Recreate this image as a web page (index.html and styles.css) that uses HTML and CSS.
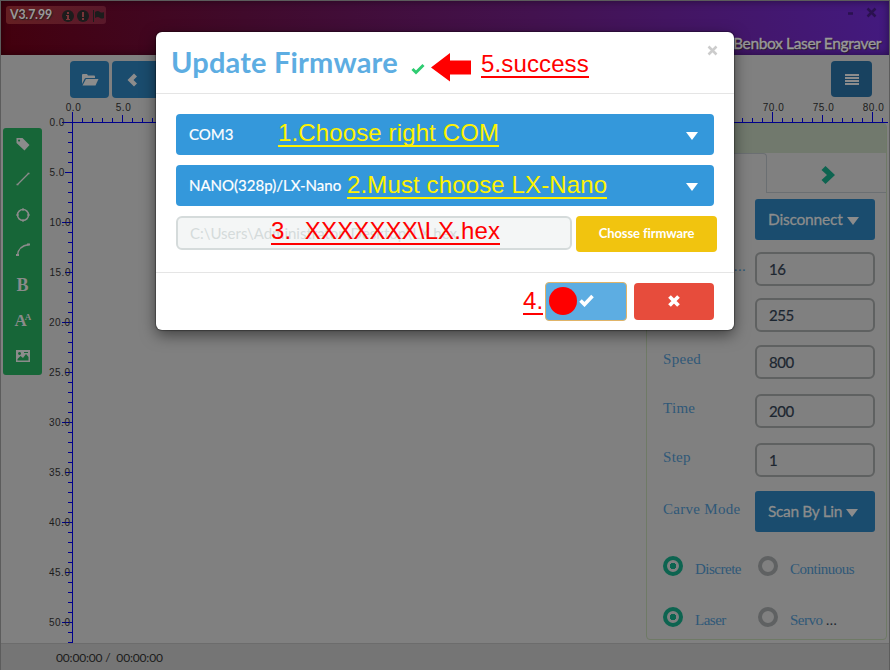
FILE: index.html
```html
<!DOCTYPE html>
<html lang="en">
<head>
<meta charset="utf-8">
<title>Benbox Laser Engraver</title>
<link rel="stylesheet" href="styles.css">
</head>
<body>
<div class="window">
  <header class="titlebar">
    <div class="version"><b>V3.7.99</b>
      <svg width="44" height="14" viewBox="0 0 44 14"><g fill="#1c1c1c"><circle cx="7" cy="7" r="6"/><circle cx="22" cy="7" r="6"/><path d="M32 1h1v12h-1zM34 3q3-2 5 0 2 1 4 0v6q-2 1-4 0-2-2-5 0z"/></g><path d="M6 3h2v2H6zM5 6h3v4h1v1H5v-1h1V7H5zM21 3h2v5h-2zM21 9h2v2h-2z" fill="#7a3538"/></svg>
    </div>
    <div class="brand">
      <svg width="36" height="14" viewBox="0 0 36 14"><path d="M3 7.500h5M22.500 2.500l8 8M30.500 2.500l-8 8" stroke="#2a1150" stroke-width="2.500" fill="none"/></svg>
      <span>Benbox Laser Engraver</span>
    </div>
  </header>
  <nav class="actions">
    <div class="action"><svg width="18" height="14" viewBox="0 0 18 14"><path d="M1 11V2q0-1 1-1h4l1 1.500h6q1 0 1 1V5H5q-1 0-1.500 1z"/><path d="M5 6h12.500l-3 6.500H1.500z"/></svg></div>
    <div class="action wide"><svg width="12" height="14" viewBox="0 0 12 14"><path d="M8 .5l3 3L7.500 7l3.500 3.500-3 3L1.500 7z"/></svg></div>
    <div class="action menu"><svg width="14" height="11" viewBox="0 0 14 11"><path d="M0 0h14v2H0zM0 3h14v2H0zM0 6h14v2H0zM0 9h14v2H0z"/></svg></div>
  </nav>
  <main class="workspace">
    <aside class="tools">
      <svg viewBox="0 0 16 16"><path fill="#8b8b8b" fill-rule="evenodd" d="M1.500 2h6l7 7-5 5.500-8-7.500zM4 3.500a1 1 0 1 0 .1 0z"/></svg>
      <svg viewBox="0 0 16 16"><path d="M2 14L14 2M1.500 13.500h2M12.500 2.500h2" stroke-width="1.300"/></svg>
      <svg viewBox="0 0 16 16"><circle cx="8" cy="8" r="5.500" stroke-width="1.500"/><path d="M7 2.500h2M7 13.500h2M1.500 8h2M12.500 8h2" stroke-width="2"/></svg>
      <svg viewBox="0 0 16 16"><path d="M2.500 13.500Q3 4 14 2.500" stroke-width="1.500"/><path d="M1 13h3M12 2.500h3" stroke-width="2"/></svg>
      <span class="bold">B</span>
      <span class="size">A<sup>A</sup></span>
      <svg viewBox="0 0 16 16"><path fill="#8b8b8b" fill-rule="evenodd" d="M1 2h14v12H1zM2.500 12.500h11V9L11 6 8 10 5.500 8l-3 3zM4.500 4a1.500 1.500 0 1 0 .1 0zM9 4h4v1H9z"/></svg>
    </aside>
    <svg class="ruler" viewBox="48 100 841 543">
      <g class="axis">
        <path d="M62 122.500H888M72.500 112V643" stroke-width="1"/>
        <path d="M72 120H888" stroke-width="4" stroke-dasharray="1 9"/>
        <path d="M122 118.500H888" stroke-width="7" stroke-dasharray="1 49"/>
        <path d="M172 117H888" stroke-width="10" stroke-dasharray="1 99"/>
        <path d="M70 122V643" stroke-width="4" stroke-dasharray="1 9"/>
        <path d="M68.500 172V643" stroke-width="7" stroke-dasharray="1 49"/>
        <path d="M67 222V643" stroke-width="10" stroke-dasharray="1 99"/>
      </g>
      <g class="top">
        <text x="73.500" y="111">0.0</text><text x="123.500" y="111">5.0</text>
        <text x="773.500" y="111">70.0</text><text x="823.500" y="111">75.0</text><text x="873.500" y="111">80.0</text>
      </g>
      <g class="side">
        <text x="49.500" y="126">0.0</text><text x="49.500" y="176">5.0</text><text x="49.500" y="226">10.0</text><text x="49.500" y="276">15.0</text><text x="49" y="326">20.0</text><text x="49" y="376">25.0</text><text x="49" y="426">30.0</text><text x="49" y="476">35.0</text><text x="49" y="526">40.0</text><text x="49" y="576">45.0</text><text x="49" y="626">50.0</text>
      </g>
    </svg>
    <section class="panel">
      <div class="band"></div>
      <div class="tabs"><div class="tab on"></div><div class="tab"><svg width="14" height="18" viewBox="0 0 14 18"><path fill="#0d6450" d="M4.500 0L14 9 4.500 18 .5 14 6 9 .5 4z"/></svg></div></div>
      <div class="form">
        <div class="row r1"><label></label><div class="pick">Disconnect<i></i></div></div>
        <div class="row r2"><label class="dots">...</label><div class="field">16</div></div>
        <div class="row r3"><label></label><div class="field">255</div></div>
        <div class="row r4"><label>Speed</label><div class="field">800</div></div>
        <div class="row r5"><label>Time</label><div class="field">200</div></div>
        <div class="row r6"><label>Step</label><div class="field">1</div></div>
        <div class="row r7"><label class="mode">Carve Mode</label><div class="pick scan">Scan By Lin<i></i></div></div>
        <div class="radios"><b class="radio on"></b><span>Discrete</span><b class="radio"></b><span>Continuous</span></div>
        <div class="radios"><b class="radio on"></b><span>Laser</span><b class="radio"></b><span>Servo <em>...</em></span></div>
      </div>
    </section>
  </main>
  <footer class="status">00:00:00 /&nbsp; 00:00:00</footer>
</div>

<div class="dialog">
  <div class="head"><h1>Update Firmware</h1>
    <svg class="ok" width="14" height="12" viewBox="0 0 14 12"><path d="M1.500 6L5 9.500 12.500 2" stroke="#2ecc71" stroke-width="3" fill="none"/></svg>
    <svg class="close" width="12" height="12" viewBox="0 0 12 12"><path d="M1.500 1.500l8 8M9.500 1.500l-8 8" stroke="#ccc" stroke-width="2.500"/></svg>
  </div>
  <div class="body">
    <div class="select">COM3<i></i></div>
    <div class="select nano">NANO(328p)/LX-Nano<i></i></div>
    <div class="file"><div class="path">C:\Users\Administrator\Desktop\LX.hex</div><div class="choose">Chosse firmware</div></div>
  </div>
  <div class="foot">
    <div class="confirm"><svg width="16" height="14" viewBox="0 0 16 14"><path d="M1.500 7.500L5.500 11.500 13.500 3" stroke="#fff" stroke-width="3.600" fill="none"/></svg></div>
    <div class="cancel"><svg width="12" height="12" viewBox="0 0 12 12"><path d="M1.500 1.500l9 9M10.500 1.500l-9 9" stroke="#fff" stroke-width="3.800"/></svg></div>
  </div>
</div>

<div class="note n1">1.Choose right COM</div>
<div class="note n2">2.Must choose LX-Nano</div>
<div class="note n3">3.&nbsp; XXXXXXX\LX.hex</div>
<div class="note n4">4.</div>
<div class="note n5">5.success</div>
<div class="dot"></div>
<svg class="arrow" width="41" height="29" viewBox="0 0 41 29"><path fill="#f00" d="M0 14.500L19 0v7.500h21v14H19V28.500z"/></svg>
</body>
</html>
```
FILE: styles.css
```css
* { box-sizing: border-box; }
body { margin: 0; width: 890px; height: 670px; overflow: hidden; position: relative; font-family: Lato, "Liberation Sans", sans-serif; }
svg { display: block; flex: none; }

.window { isolation: isolate; width: 890px; height: 670px; border: 1px solid #5c5c5c; background: #808080; display: grid; grid-template-rows: 54px 45px 543px 1fr; }

.titlebar { display: flex; justify-content: space-between; padding: 5px 8px 0 5px; background: linear-gradient(75deg, #43000d 0%, #400a2b 28%, #43124f 60%, #431a80 100%); box-shadow: inset 0 0 8px rgba(0,0,0,.45); }
.version { display: flex; align-items: center; width: 100px; height: 18px; padding-left: 4px; border-radius: 3px; background: linear-gradient(90deg, #641f22, #59182a); color: #999; font-size: 12.300px; text-shadow: 1px 1px 1px #222; }
.version b { width: 51px; white-space: nowrap; line-height: 16px; letter-spacing: -.15px; }
.version svg { margin-top: 1px; }
.brand { display: flex; flex-direction: column; align-items: flex-end; color: #999; font-size: 15.500px; white-space: nowrap; text-shadow: 1px 1px 1px #222; }
.brand span { line-height: 20px; margin-top: 13px; letter-spacing: -.36px; -webkit-text-stroke: .4px #999; }

.actions { display: flex; gap: 3px; padding: 6px 17px 0 69px; }
.action { width: 39px; height: 37px; border-radius: 4px; background: #1a4c6e; display: flex; align-items: center; justify-content: center; }
.action svg { fill: #8c8c8c; }
.action.wide { width: 80px; justify-content: flex-start; padding-left: 14px; }
.action.menu { margin-left: auto; width: 41px; height: 36px; background: #184260; }

.workspace { display: grid; grid-template-columns: 47px 598px 243px; grid-template-rows: 543px; }
.tools { grid-area: 1 / 1; margin: 28px 0 0 2px; width: 39px; height: 247px; border-radius: 3px; background: #176638; display: flex; flex-direction: column; align-items: center; padding-top: 8px; gap: 19.300px; color: #8b8b8b; font-family: "Liberation Serif", serif; }
.tools > * { width: 16px; height: 16px; flex: none; fill: none; stroke: #8b8b8b; stroke-width: 0; }
.bold { font-weight: bold; font-size: 18px; line-height: 17px; text-align: center; }
.size { font-size: 17px; line-height: 17px; font-weight: bold; white-space: nowrap; }
.size sup { font-size: 9px; line-height: 1px; vertical-align: 6px; margin-left: -2px; }

.ruler { grid-area: 1 / 2 / 2 / 4; width: 841px; height: 543px; z-index: 1; font: 10px "Liberation Sans", sans-serif; letter-spacing: .5px; fill: #1c1c1c; }
.axis { stroke: #00008c; fill: none; shape-rendering: crispEdges; }
.top { text-anchor: middle; }

.panel { grid-area: 1 / 3; margin: 23px 2px 3px 0; border: 1px solid #6f7a66; border-radius: 4px; }
.band { height: 29px; background: #71796d; }
.tabs { display: flex; height: 40px; }
.tab { flex: 1; border-bottom: 1px solid #6b6f72; display: flex; align-items: center; justify-content: center; padding: 4px 0 0 2px; }
.tab.on { border: solid #6b6f72; border-width: 1px 1px 0 0; border-radius: 0 4px 0 0; }
.form { padding: 6px 12px 0 16px; font-family: "Liberation Serif", serif; color: #2f5878; font-size: 15px; }
.row { display: grid; grid-template-columns: 92px 120px; align-items: start; }
.row label { letter-spacing: .3px; line-height: 20px; padding-top: 4px; white-space: nowrap; }
.row label.mode { padding-top: 8px; }
.row label.dots { text-align: right; padding: 6px 9px 0 0; line-height: 16px; }
.pick { height: 41px; border-radius: 3px; background: #1a4c6e; color: #8c8c8c; font: 15.500px/41px Lato, sans-serif; letter-spacing: -.2px; padding: 0 0 0 13px; display: flex; align-items: center; white-space: nowrap; -webkit-text-stroke: .3px #8c8c8c; }
.pick.scan { letter-spacing: -.35px; }
.pick i { border: 6px solid transparent; border-top: 8px solid #8c8c8c; border-bottom: 0; margin: 2px 0 0 4px; }
.field { height: 34px; border: 2px solid #5f6161; border-radius: 6px; font: 15px/30px Lato, sans-serif; letter-spacing: -.4px; color: #1c2630; padding-left: 12px; -webkit-text-stroke: .2px #1c2630; }
.r1 { height: 53px; } .r2 { height: 46px; } .r3 { height: 47px; } .r4 { height: 49px; } .r5 { height: 49px; } .r6 { height: 48px; } .r7 { height: 65px; }
.radios { display: grid; grid-template-columns: 32px 62.500px 32.500px 1fr; height: 51px; }
.radio { width: 20px; height: 20px; border: 4px solid #5f6162; border-radius: 50%; }
.radio.on { border-color: #0d6450; background: radial-gradient(circle, #0d6450 3px, transparent 3.500px); }
.radios span { line-height: 20px; padding-top: 3px; white-space: nowrap; letter-spacing: -.5px; }
.radios em { font-style: normal; color: #1c2630; letter-spacing: 0; }
.status { background: #757575; border-top: 1px solid #6c6c6c; padding-left: 55px; font-size: 12px; letter-spacing: -.17px; line-height: 28px; color: #1c1c1c; }

.dialog { position: absolute; left: 156px; top: 32px; width: 578px; height: 298px; border-radius: 6px; background: #fff; box-shadow: 0 5px 15px rgba(0,0,0,.5), 0 0 1px 1px rgba(0,0,0,.3); display: grid; grid-template-rows: 62px 178px 1fr; }
.head { border-bottom: 1px solid #e5e5e5; display: flex; padding: 0 15px; }
.head h1 { margin: 0; font-size: 29px; line-height: 60px; letter-spacing: .18px; color: #5dade2; white-space: nowrap; width: 240px; }
.ok { margin-top: 31px; }
.close { margin: 13px 0 0 auto; }
.body { padding: 20px 17px 0 20px; display: flex; flex-direction: column; gap: 10px; }
.select { height: 41px; width: 538px; border-radius: 4px; background: #3498db; color: #fff; font-size: 15px; -webkit-text-stroke: .2px #fff; padding: 0 16px 2px 13px; display: flex; align-items: center; justify-content: space-between; }
.select i { border: 6px solid transparent; border-top: 8px solid #fff; border-bottom: 0; margin-top: 5px; }
.file { display: flex; gap: 4px; }
.path { width: 396px; height: 34px; border: 2px solid #d5dbdb; border-radius: 6px; background: #f4f6f6; color: #d5dbdb; font-size: 15px; line-height: 31px; padding-left: 12px; white-space: nowrap; }
.choose { width: 141px; height: 36px; border-radius: 4px; background: #f1c40f; color: #fff; font-size: 13px; letter-spacing: -.1px; font-weight: bold; line-height: 35px; text-align: center; }
.foot { border-top: 1px solid #e5e5e5; display: flex; justify-content: flex-end; padding: 9px 20px 0 0; gap: 7px; }
.confirm { width: 82px; height: 39px; border: 1px solid #e0b468; border-radius: 4px; background: #5dade2; padding: 10px 0 0 33px; }
.cancel { width: 80px; height: 37px; margin-top: 1px; border-radius: 4px; background: #e74c3c; display: flex; align-items: center; justify-content: center; }
.cancel svg { margin-bottom: 2px; }

.note { position: absolute; font: 24px/25px "Liberation Sans", sans-serif; letter-spacing: .13px; height: 27px; white-space: pre; border-bottom: 2px solid; }
.n1 { left: 278px; top: 120px; color: #fff200; }
.n2 { left: 347px; top: 172px; color: #fff200; }
.n3 { left: 271px; top: 218px; color: #f00; }
.n4 { left: 523px; top: 288px; color: #f00; }
.n5 { left: 481px; top: 51px; color: #f00; }
.dot { position: absolute; left: 549px; top: 287px; width: 28px; height: 28px; border-radius: 50%; background: #f00; }
.arrow { position: absolute; left: 431px; top: 53px; }
```
